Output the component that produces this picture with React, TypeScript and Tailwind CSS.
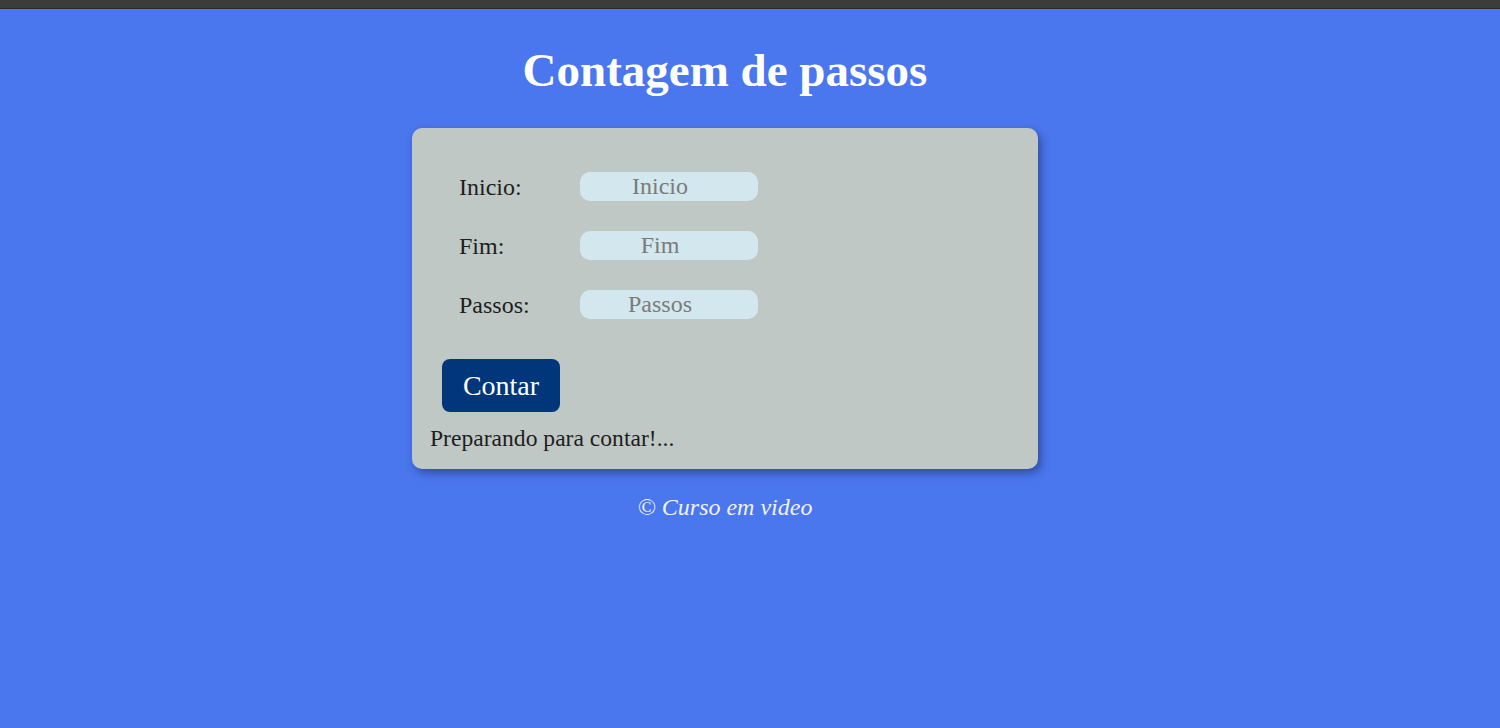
import React from "react";

const serif = { fontFamily: '"Liberation Serif", "Times New Roman", serif' };

function Row({ label, ph }: { label: string; ph: string }) {
  return (
    <div className="flex items-center h-[29px]">
      <span className="w-[121px] text-[24px] leading-none text-[#1e1e1e]">{label}</span>
      <input
        placeholder={ph}
        className="w-[178px] h-[29px] rounded-[10px] bg-[#d3e7ee] text-center text-[24px] leading-none font-['Liberation_Serif',serif] placeholder:text-[#7b7b7b] placeholder:font-['Liberation_Serif',serif] outline-none border-0 pl-0 pr-[18px] py-0"
        style={serif}
      />
    </div>
  );
}

export default function App() {
  return (
    <div className="min-h-[728px] bg-[#4a76ee] flex flex-col font-['Liberation_Serif',serif]" style={serif}>
      <div className="h-[9px] bg-[#3c3c3c] border-b border-[#2b2b22]" />
      <div className="flex flex-col items-center pr-[50px]">
        <h1 className="mt-[34px] text-[47px] font-bold text-white leading-[54px]">Contagem de passos</h1>
        <div className="mt-[31px] w-[626px] h-[341px] rounded-[10px] bg-[#bfc8c5] shadow-[3px_4px_8px_rgba(0,0,0,0.35)] flex flex-col pt-[44px]">
          <div className="flex flex-col gap-[30px] pl-[47px]">
            <Row label="Inicio:" ph="Inicio" />
            <Row label="Fim:" ph="Fim" />
            <Row label="Passos:" ph="Passos" />
          </div>
          <button
            className="mt-[40px] ml-[30px] w-[118px] h-[53px] rounded-[8px] bg-[#02367a] text-white text-[28px] leading-none"
            style={serif}
          >
            Contar
          </button>
          <p className="mt-[12px] ml-[18px] text-[23.6px] leading-[28px] text-[#1e1e1e]">Preparando para contar!...</p>
        </div>
        <p className="mt-[24px] text-[24px] italic leading-[28px] text-[#f2f2ff]">© Curso em video</p>
      </div>
    </div>
  );
}
